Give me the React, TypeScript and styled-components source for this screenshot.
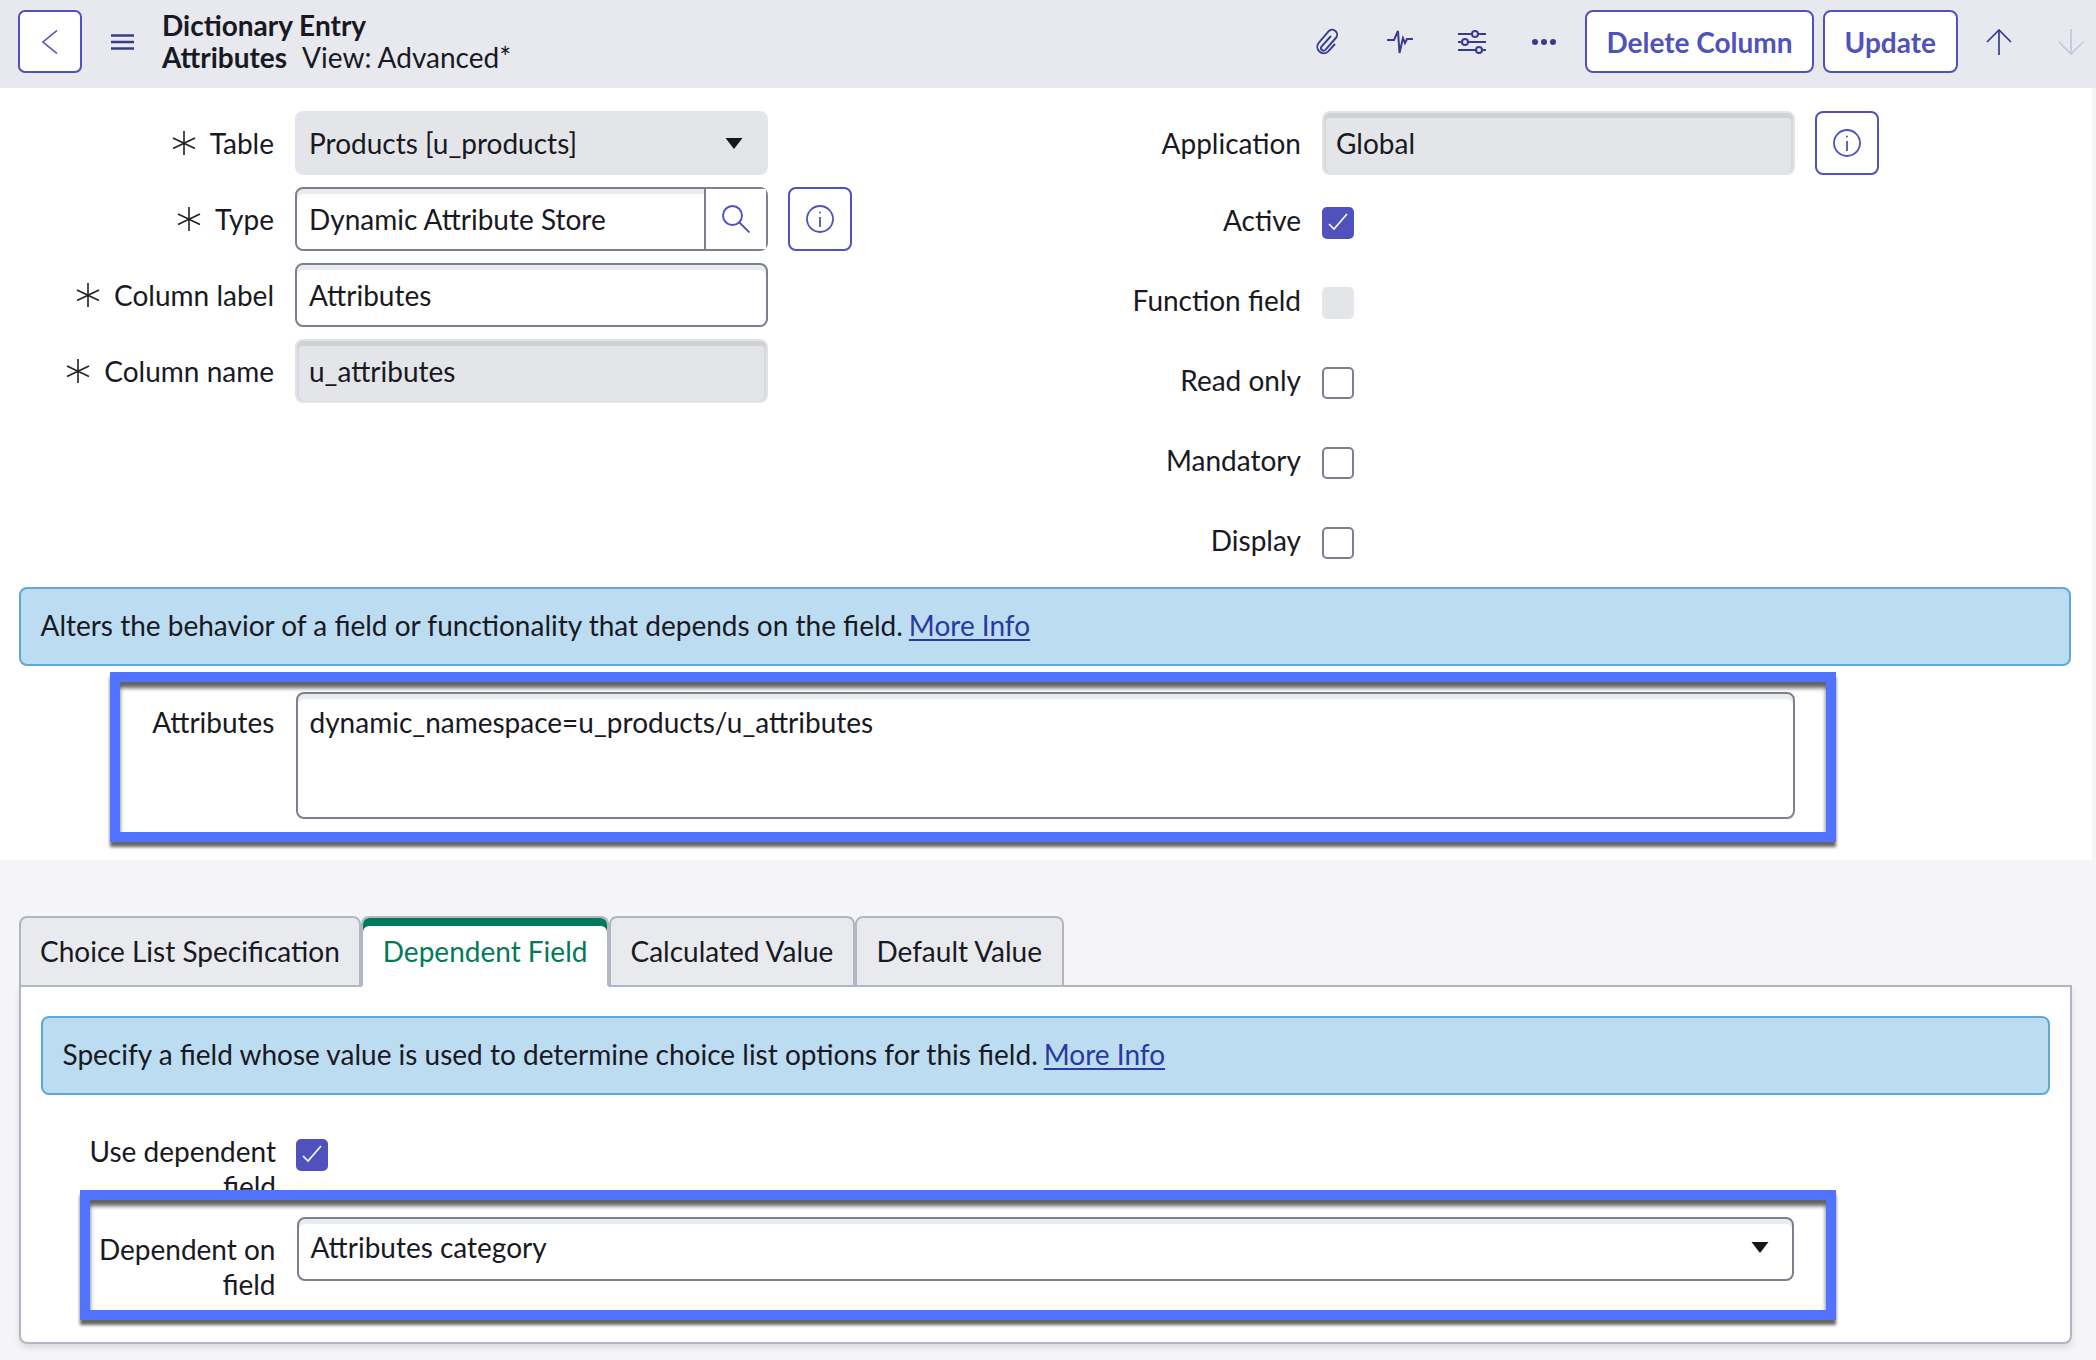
import styled, { createGlobalStyle } from "styled-components";

const GlobalStyle = createGlobalStyle`
  * {
    box-sizing: border-box;
  }

  body {
    margin: 0;
    background: #f5f5f8;
    color: #181923;
    font-family: Lato, "Liberation Sans", sans-serif;
    font-size: 28px;
    line-height: 35px;
  }
`;

const Page = styled.div`
  width: 2096px;
  min-height: 1360px;
  background: #f5f5f8;
`;

const Header = styled.header`
  display: flex;
  align-items: center;
  height: 88px;
  padding: 0 12.5px 5px 18px;
  background: #e7e9ee;
`;
const BackButton = styled.button`
  display: flex;
  align-items: center;
  justify-content: center;
  width: 63.5px;
  height: 63px;
  padding: 0;
  background: #fff;
  border: 2px solid #4f52bd;
  border-radius: 7px;
`;
const Burger = styled.svg`
  width: 23px;
  height: 16px;
  margin: 0 28px 0 29.5px;
`;
const Title = styled.div`
  margin-top: -2px;
  line-height: 32px;

  & b {
    font-weight: 700;
  }

  & span {
    margin-left: 15px;
  }
`;
const HeaderActions = styled.div`
  display: flex;
  align-items: center;
  margin-left: auto;
`;
const IconSlot = styled.div`
  display: flex;
  align-items: center;
  justify-content: center;
  width: 72px;
  height: 63px;
`;
const ActionButton = styled.button`
  height: 63px;
  padding: 0 19.5px;
  margin-left: ${(p) => p.$gap}px;
  background: #fff;
  border: 2px solid #4f52bd;
  border-radius: 8px;
  color: #4f52bd;
  font-family: inherit;
  font-size: 28px;
  font-weight: 700;
`;
const Arrow = styled.svg`
  width: 26px;
  height: 26px;
  margin-left: ${(p) => p.$gap}px;
`;

const FormCard = styled.section`
  height: 772px;
  margin-right: 4px;
  padding-top: 23px;
  background: #fff;
`;
const FormColumns = styled.div`
  display: grid;
  grid-template-columns: 1000px 1fr;
  height: 453px;
  margin-bottom: 23px;
`;
const Stack = styled.div`
  display: flex;
  flex-direction: column;
  gap: ${(p) => p.$gap}px;
`;
const FieldRow = styled.div`
  display: grid;
  grid-template-columns: ${(p) => p.$label}px 473px 64px;
  column-gap: 20px;
  align-items: center;
  margin-bottom: ${(p) => p.$after || 0}px;
`;
const Label = styled.label`
  display: flex;
  align-items: center;
  justify-content: flex-end;
  gap: 14px;
  padding-right: 1px;
  text-align: right;
`;
const CheckLabel = styled(Label)`
  align-self: start;
  height: 26px;
  padding-right: 0;
  line-height: 26px;
`;
const Field = styled.div`
  display: flex;
  align-items: center;
  justify-content: space-between;
  height: 64px;
  padding: 0 12px;
  border-radius: 8px;
  background: #fff;
  border: 2px solid #7a8090;
  box-shadow: inset 0 5px 0 #e9ebec;
`;
const ReadOnlyField = styled(Field)`
  background: #e4e5e9;
  border-color: #e2e3e7;
  box-shadow: inset 0 5px 0 #d0d1d6, inset 2px 0 0 #d8d9dd, inset -2px 0 0 #d8d9dd;
`;
const SelectField = styled(Field)`
  background: #e4e5e9;
  border-color: #e4e5e9;
  box-shadow: none;
  padding-right: 23px;
`;
const DependentSelect = styled(Field)`
  padding: 0 23px 3px 12px;
`;
const LookupField = styled(Field)`
  padding-right: 0;
`;
const LookupButton = styled.div`
  display: flex;
  align-items: center;
  justify-content: center;
  width: 62px;
  height: 60px;
  border-left: 2px solid #7a8090;
  background: #fff;
`;
const InfoButton = styled.div`
  display: flex;
  align-items: center;
  justify-content: center;
  width: 64px;
  height: 64px;
  background: #fff;
  border: 2px solid #4f52bd;
  border-radius: 8px;
`;
const CheckRow = styled.div`
  display: grid;
  grid-template-columns: 301px 32px;
  grid-template-rows: 32px;
  column-gap: 21px;
  height: 32px;
`;
const CheckBox = styled.div`
  display: flex;
  align-items: center;
  justify-content: center;
  width: 32px;
  height: 32px;
  border-radius: 5px;
  background: ${(p) => (p.$state === "on" ? "#4f52bd" : p.$state === "off" ? "#fff" : "#e4e5e9")};
  border: ${(p) => (p.$state === "off" ? "2px solid #7a8090" : "none")};
`;

const InfoBar = styled.div`
  display: flex;
  align-items: center;
  gap: 6px;
  height: 79px;
  padding: 0 20px 2px;
  background: #bcdcf1;
  border: 2px solid #5fa8dc;
  border-radius: 8px;
`;
const FormInfoBar = styled(InfoBar)`
  width: 2052.5px;
  margin-left: 18.5px;
`;
const MoreInfo = styled.a`
  color: #2b3a9e;
  text-decoration: underline;
  text-decoration-thickness: 2px;
  text-underline-offset: 3px;
`;

const Highlight = styled.div`
  position: relative;
  display: grid;
  background: #fff;
  border: 10px solid #5273ff;
  box-shadow: 0 5px 3px rgba(0, 0, 0, 0.6), inset 0 6px 4px rgba(0, 0, 0, 0.62);
`;
const AttributesBox = styled(Highlight)`
  grid-template-columns: 154.5px 1499px;
  column-gap: 21px;
  width: 1726px;
  height: 170px;
  margin: 6px 0 0 110px;
  padding-top: 10px;
`;
const DependentBox = styled(Highlight)`
  grid-template-columns: 186px 1497px;
  column-gap: 21px;
  width: 1756px;
  height: 130px;
  margin-left: 39px;
  padding-top: 17px;
`;
const TopLabel = styled.div`
  padding-top: ${(p) => p.$top}px;
  text-align: right;
`;
const TextArea = styled(Field)`
  align-items: flex-start;
  height: 127px;
  padding-top: 11px;
`;

const Tabs = styled.div`
  position: relative;
  z-index: 1;
  display: flex;
  height: 71px;
  margin: 56px 0 -2px 18.5px;
`;
const Tab = styled.div`
  display: flex;
  align-items: center;
  padding: 0 19.5px;
  background: ${(p) => (p.$active ? "#fff" : "#e9eaee")};
  border: 2px solid #b2b6c4;
  border-bottom-color: ${(p) => (p.$active ? "#fff" : "#b2b6c4")};
  border-radius: 8px 8px 0 0;
  color: ${(p) => (p.$active ? "#017a5a" : "#181923")};
  box-shadow: ${(p) => (p.$active ? "inset 0 8px 0 #017a5a" : "none")};
`;
const TabPanel = styled.div`
  width: 2053.5px;
  height: 359px;
  margin-left: 18.5px;
  padding: 29px 20px 0;
  background: #fff;
  border: 2px solid #b2b6c4;
  border-radius: 0 0 8px 8px;
  box-shadow: 0 4px 6px rgba(0, 0, 0, 0.1);
`;
const DependentRow = styled.div`
  display: grid;
  grid-template-columns: 235.5px 32px;
  column-gap: 20px;
  height: 51px;
  margin-top: 44px;
`;
const DependentLabel = styled.div`
  margin-top: -5px;
  text-align: right;
`;

const Star = () => (
  <svg width="24" height="24" viewBox="0 0 24 24" fill="none" stroke="#222" strokeWidth="1.6">
    <path d="M12 0v24M1 7l22 10.5M1 17.5L23 7" />
  </svg>
);
const Caret = () => (
  <svg width="18" height="11" viewBox="0 0 18 11" fill="#14151d">
    <path d="M0.5 0h17L9 11z" />
  </svg>
);
const Check = () => (
  <svg width="32" height="32" viewBox="0 0 32 32" fill="none" stroke="#fff" strokeWidth="1.6">
    <path d="M7 17l5 5L25 7" />
  </svg>
);
const InfoIcon = () => (
  <svg width="28" height="28" viewBox="0 0 28 28" fill="none" stroke="#4f52bd" strokeWidth="1.8">
    <circle cx="14" cy="14" r="13" />
    <path d="M14 12v10" />
    <circle cx="14" cy="7.5" r="1" fill="#4f52bd" stroke="none" />
  </svg>
);

const headerIcon = "#383c8f";

function App() {
  return (
    <Page>
      <GlobalStyle />
      <Header>
        <BackButton>
          <svg width="16" height="24" viewBox="0 0 16 24" fill="none" stroke="#4f52bd" strokeWidth="1.6">
            <path d="M15 0.5L1 12l14 11.5" />
          </svg>
        </BackButton>
        <Burger viewBox="0 0 23 16" fill="none" stroke={headerIcon} strokeWidth="2.4">
          <path d="M0 1.5h23M0 8h23M0 14.5h23" />
        </Burger>
        <Title>
          <b>Dictionary Entry</b>
          <br />
          <b>Attributes</b>
          <span>View: Advanced*</span>
        </Title>
        <HeaderActions>
          <IconSlot>
            <svg width="25" height="28" viewBox="0 0 25 28" fill="none" stroke={headerIcon} strokeWidth="1.9">
              <path d="M16 8L6.5 18.5a2.6 2.6 0 0 0 3.9 3.4L20.8 10a4.9 4.9 0 0 0-7.3-6.6L3.6 15a6.4 6.4 0 0 0 9.4 8.6L20 16" />
            </svg>
          </IconSlot>
          <IconSlot>
            <svg width="26" height="24" viewBox="0 0 26 24" fill="none" stroke={headerIcon} strokeWidth="2">
              <path d="M0 10h7l4-9 1.5 22 3.500-15 2 5 2-4h6.500" />
            </svg>
          </IconSlot>
          <IconSlot>
            <svg width="28" height="24" viewBox="0 0 28 24" fill="#e7e9ee" stroke={headerIcon} strokeWidth="2">
              <path d="M0 4h28M0 12h28M0 20h28" />
              <circle cx="17" cy="4" r="3" />
              <circle cx="7" cy="12" r="3" />
              <circle cx="21" cy="20" r="3" />
            </svg>
          </IconSlot>
          <IconSlot>
            <svg width="24" height="8" viewBox="0 0 24 8" fill={headerIcon}>
              <circle cx="3" cy="4" r="3" />
              <circle cx="12" cy="4" r="3" />
              <circle cx="21" cy="4" r="3" />
            </svg>
          </IconSlot>
          <ActionButton $gap={5}>Delete Column</ActionButton>
          <ActionButton $gap={9}>Update</ActionButton>
          <Arrow $gap={28} viewBox="0 0 26 26" fill="none" stroke={headerIcon} strokeWidth="1.7">
            <path d="M13 26V1M1 13L13 1l12 12" />
          </Arrow>
          <Arrow $gap={46} viewBox="0 0 26 26" fill="none" stroke="#c3c6da" strokeWidth="1.7">
            <path d="M13 0v25M1 13l12 12 12-12" />
          </Arrow>
        </HeaderActions>
      </Header>

      <FormCard>
        <FormColumns>
          <Stack $gap={12}>
            <FieldRow $label={275}>
              <Label>
                <Star />
                Table
              </Label>
              <SelectField>
                Products [u_products]
                <Caret />
              </SelectField>
            </FieldRow>
            <FieldRow $label={275}>
              <Label>
                <Star />
                Type
              </Label>
              <LookupField>
                Dynamic Attribute Store
                <LookupButton>
                  <svg width="28" height="28" viewBox="0 0 28 28" fill="none" stroke="#4f52bd" strokeWidth="1.9">
                    <circle cx="10.500" cy="10.500" r="9.500" />
                    <path d="M17.500 17.500L27.500 27.500" />
                  </svg>
                </LookupButton>
              </LookupField>
              <InfoButton>
                <InfoIcon />
              </InfoButton>
            </FieldRow>
            <FieldRow $label={275}>
              <Label>
                <Star />
                Column label
              </Label>
              <Field>Attributes</Field>
            </FieldRow>
            <FieldRow $label={275}>
              <Label>
                <Star />
                Column name
              </Label>
              <ReadOnlyField>u_attributes</ReadOnlyField>
            </FieldRow>
          </Stack>
          <div>
            <FieldRow $label={302} $after={32}>
              <Label>Application</Label>
              <ReadOnlyField>Global</ReadOnlyField>
              <InfoButton>
                <InfoIcon />
              </InfoButton>
            </FieldRow>
            <Stack $gap={48}>
              <CheckRow>
                <CheckLabel>Active</CheckLabel>
                <CheckBox $state="on">
                  <Check />
                </CheckBox>
              </CheckRow>
              <CheckRow>
                <CheckLabel>Function field</CheckLabel>
                <CheckBox $state="disabled" />
              </CheckRow>
              <CheckRow>
                <CheckLabel>Read only</CheckLabel>
                <CheckBox $state="off" />
              </CheckRow>
              <CheckRow>
                <CheckLabel>Mandatory</CheckLabel>
                <CheckBox $state="off" />
              </CheckRow>
              <CheckRow>
                <CheckLabel>Display</CheckLabel>
                <CheckBox $state="off" />
              </CheckRow>
            </Stack>
          </div>
        </FormColumns>
        <FormInfoBar>
          Alters the behavior of a field or functionality that depends on the field.
          <MoreInfo>More Info</MoreInfo>
        </FormInfoBar>
        <AttributesBox>
          <TopLabel $top={13}>Attributes</TopLabel>
          <TextArea>dynamic_namespace=u_products/u_attributes</TextArea>
        </AttributesBox>
      </FormCard>

      <Tabs>
        <Tab>Choice List Specification</Tab>
        <Tab $active>Dependent Field</Tab>
        <Tab>Calculated Value</Tab>
        <Tab>Default Value</Tab>
      </Tabs>
      <TabPanel>
        <InfoBar>
          Specify a field whose value is used to determine choice list options for this field.
          <MoreInfo>More Info</MoreInfo>
        </InfoBar>
        <DependentRow>
          <DependentLabel>
            Use dependent
            <br />
            field
          </DependentLabel>
          <CheckBox $state="on">
            <Check />
          </CheckBox>
        </DependentRow>
        <DependentBox>
          <TopLabel $top={15}>
            Dependent on
            <br />
            field
          </TopLabel>
          <DependentSelect>
            Attributes category
            <Caret />
          </DependentSelect>
        </DependentBox>
      </TabPanel>
    </Page>
  );
}

export default App;
